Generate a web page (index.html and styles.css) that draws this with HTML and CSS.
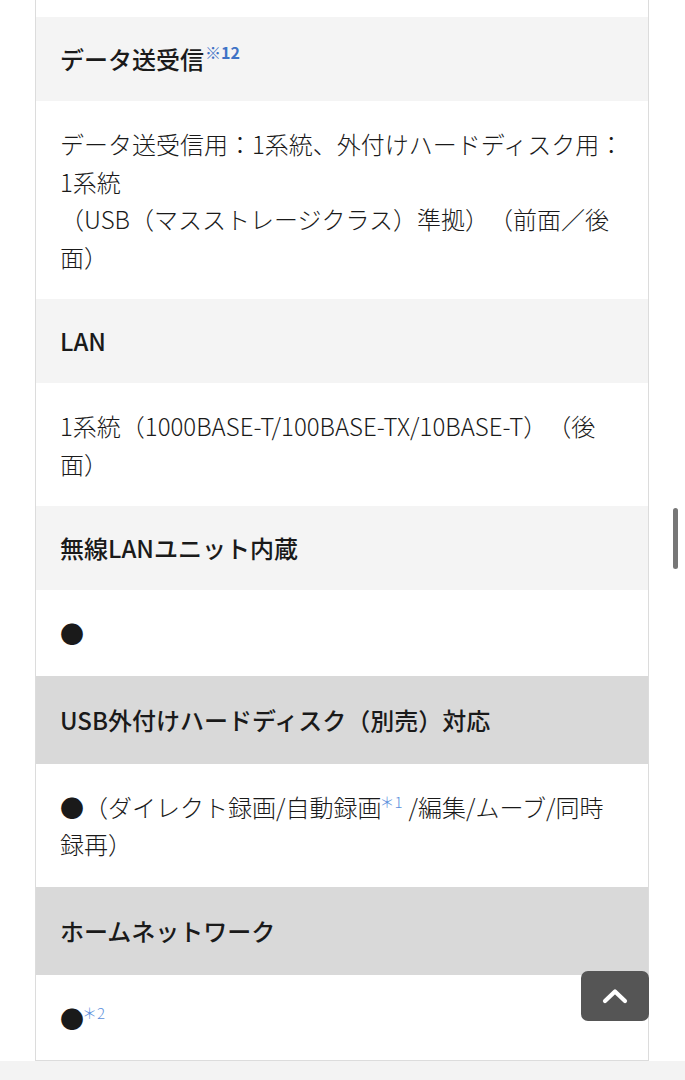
FILE: index.html
```html
<!DOCTYPE html>
<html lang="ja">
<head>
<meta charset="utf-8">
<link rel="stylesheet" href="styles.css">
</head>
<body>
<div class="spec">
  <div class="cell top"></div>
  <div class="cell head">データ送受信<sup class="note strong">※12</sup></div>
  <div class="cell body">データ送受信用：1系統、外付けハードディスク用：1系統<br>（USB（マスストレージクラス）準拠）（前面／後面）</div>
  <div class="cell head">LAN</div>
  <div class="cell body">1系統（1000BASE-T/100BASE-TX/10BASE-T）（後面）</div>
  <div class="cell head">無線LANユニット内蔵</div>
  <div class="cell body">●</div>
  <div class="cell head dark">USB外付けハードディスク（別売）対応</div>
  <div class="cell body">●（ダイレクト録画/自動録画<sup class="note">＊1</sup>/編集/ムーブ/同時録再）</div>
  <div class="cell head dark">ホームネットワーク</div>
  <div class="cell body">●<sup class="note">＊2</sup></div>
</div>
<div class="footer"></div>
<a class="totop" href="#" aria-label="ページトップへ">
  <svg width="26" height="16" viewBox="0 0 26 16"><path d="M3 13 L13 3.5 L23 13" fill="none" stroke="#fff" stroke-width="4.2" stroke-linecap="round" stroke-linejoin="round"/></svg>
</a>
<div class="scrollbar"></div>
</body>
</html>
```

FILE: styles.css
```css
html, body {
  margin: 0;
  padding: 0;
  background: #fff;
}
body {
  font-family: "Noto Sans CJK JP", "Noto Sans", sans-serif;
  color: #1a1a1a;
  font-size: 24px;
  text-spacing-trim: space-all;
}
.spec {
  margin-left: 35px;
  width: 612px;
  border-left: 1px solid #dcdcdc;
  border-right: 1px solid #dcdcdc;
  border-bottom: 1px solid #dcdcdc;
  display: flex;
  flex-direction: column;
}
.cell {
  padding: 0 22px 0 24px;
}
.top {
  height: 17px;
  background: #fff;
}
.head {
  background: #f4f4f4;
  font-weight: 500;
  line-height: 36px;
  padding-top: 24px;
  padding-bottom: 24px;
  height: 36px;
}
.head.dark {
  background: #d9d9d9;
  padding-top: 26px;
  padding-bottom: 26px;
}
.body {
  background: #fff;
  font-weight: 300;
  line-height: 37.5px;
  padding-top: 24px;
  padding-bottom: 24px;
}
.note {
  font-size: 15px;
  line-height: 0;
  vertical-align: 0;
  position: relative;
  top: -9px;
  margin-left: -2px;
  margin-right: 6px;
  color: #5b8fdc;
  font-weight: 300;
}
.note.strong {
  font-size: 16px;
  color: #3f73c6;
  font-weight: 700;
  top: -10px;
  margin-left: 1px;
  margin-right: 0;
}
.footer {
  height: 40px;
  background: #f3f3f3;
}
.totop {
  position: fixed;
  left: 581px;
  top: 971px;
  width: 68px;
  height: 50px;
  background: #555;
  border-radius: 7px;
  display: flex;
  align-items: center;
  justify-content: center;
}
.scrollbar {
  position: fixed;
  left: 673px;
  top: 508px;
  width: 5px;
  height: 61px;
  border-radius: 3px;
  background: #777;
}
```
